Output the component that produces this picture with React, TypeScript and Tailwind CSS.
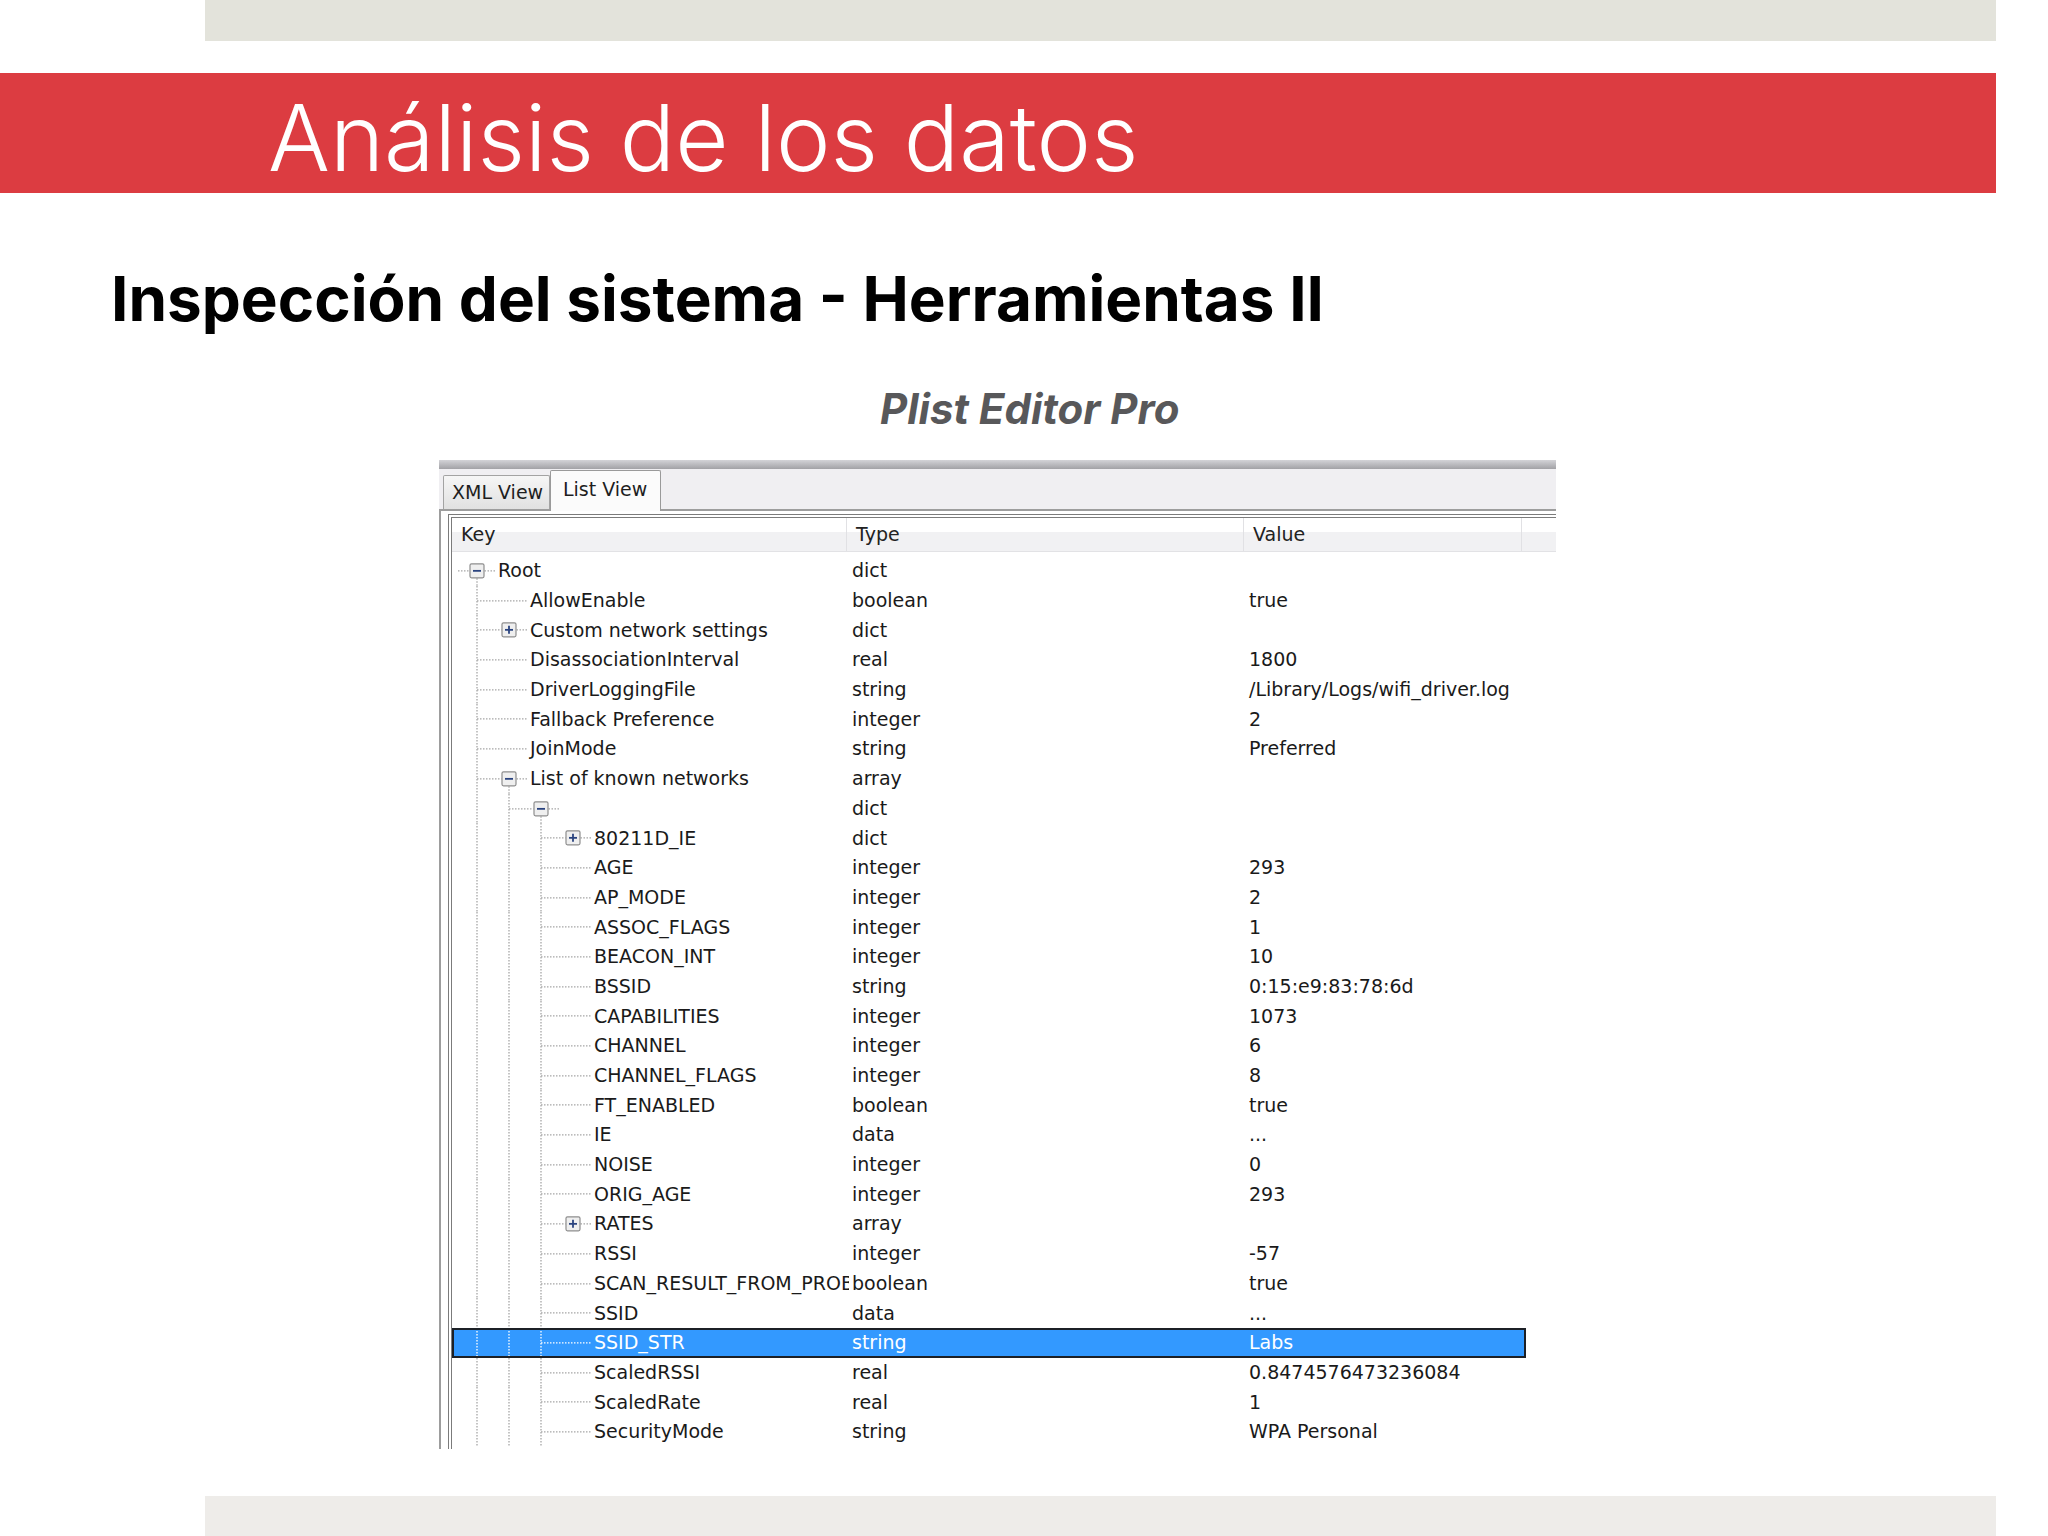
import clsx from 'clsx'

type Row = {
  key: string
  type: string
  value: string
  depth: number
  box?: 'plus' | 'minus'
  selected?: boolean
}

const ROWS: Row[] = [
  { key: 'Root', type: 'dict', value: '', depth: 0, box: 'minus' },
  { key: 'AllowEnable', type: 'boolean', value: 'true', depth: 1 },
  { key: 'Custom network settings', type: 'dict', value: '', depth: 1, box: 'plus' },
  { key: 'DisassociationInterval', type: 'real', value: '1800', depth: 1 },
  { key: 'DriverLoggingFile', type: 'string', value: '/Library/Logs/wifi_driver.log', depth: 1 },
  { key: 'Fallback Preference', type: 'integer', value: '2', depth: 1 },
  { key: 'JoinMode', type: 'string', value: 'Preferred', depth: 1 },
  { key: 'List of known networks', type: 'array', value: '', depth: 1, box: 'minus' },
  { key: '', type: 'dict', value: '', depth: 2, box: 'minus' },
  { key: '80211D_IE', type: 'dict', value: '', depth: 3, box: 'plus' },
  { key: 'AGE', type: 'integer', value: '293', depth: 3 },
  { key: 'AP_MODE', type: 'integer', value: '2', depth: 3 },
  { key: 'ASSOC_FLAGS', type: 'integer', value: '1', depth: 3 },
  { key: 'BEACON_INT', type: 'integer', value: '10', depth: 3 },
  { key: 'BSSID', type: 'string', value: '0:15:e9:83:78:6d', depth: 3 },
  { key: 'CAPABILITIES', type: 'integer', value: '1073', depth: 3 },
  { key: 'CHANNEL', type: 'integer', value: '6', depth: 3 },
  { key: 'CHANNEL_FLAGS', type: 'integer', value: '8', depth: 3 },
  { key: 'FT_ENABLED', type: 'boolean', value: 'true', depth: 3 },
  { key: 'IE', type: 'data', value: '...', depth: 3 },
  { key: 'NOISE', type: 'integer', value: '0', depth: 3 },
  { key: 'ORIG_AGE', type: 'integer', value: '293', depth: 3 },
  { key: 'RATES', type: 'array', value: '', depth: 3, box: 'plus' },
  { key: 'RSSI', type: 'integer', value: '-57', depth: 3 },
  { key: 'SCAN_RESULT_FROM_PROBE', type: 'boolean', value: 'true', depth: 3 },
  { key: 'SSID', type: 'data', value: '...', depth: 3 },
  { key: 'SSID_STR', type: 'string', value: 'Labs', depth: 3, selected: true },
  { key: 'ScaledRSSI', type: 'real', value: '0.8474576473236084', depth: 3 },
  { key: 'ScaledRate', type: 'real', value: '1', depth: 3 },
  { key: 'SecurityMode', type: 'string', value: 'WPA Personal', depth: 3 },
]

const H = 29.7
const MID = H / 2
const lineX = (k: number) => 25 + 32 * k

/* tree connectors for one row, drawn left of the key text */
function TreeLines({ row }: { row: Row }) {
  const { depth, box, selected } = row
  const width = 46 + 32 * depth
  const stroke = selected ? '#ffffff' : '#a6a6a6'
  const dash = '1.5 1.5'
  const c = lineX(depth)

  const verticals = Array.from({ length: depth }, (_, k) => (
    <line key={k} x1={lineX(k)} y1={0} x2={lineX(k)} y2={H} stroke={stroke} strokeWidth={1.3} strokeDasharray={dash} />
  ))

  const hStart = depth === 0 ? 6 : lineX(depth - 1)
  const hEnd = box ? c - 7.5 : width - 2

  return (
    <svg width={width} height={H} className="shrink-0">
      {verticals}
      <line x1={hStart} y1={MID} x2={hEnd} y2={MID} stroke={stroke} strokeWidth={1.3} strokeDasharray={dash} />
      {box && (
        <>
          {box === 'minus' && (
            <line x1={c} y1={MID + 7.5} x2={c} y2={H} stroke={stroke} strokeWidth={1.3} strokeDasharray={dash} />
          )}
          <line x1={c + 7.5} y1={MID} x2={width - 2} y2={MID} stroke={stroke} strokeWidth={1.3} strokeDasharray={dash} />
          <rect x={c - 7} y={MID - 7} width={14} height={14} rx={1.5} fill="#efefef" stroke="#8e8e8e" strokeWidth={1.2} />
          <line x1={c - 4} y1={MID} x2={c + 4} y2={MID} stroke="#2a437f" strokeWidth={1.8} />
          {box === 'plus' && <line x1={c} y1={MID - 4} x2={c} y2={MID + 4} stroke="#2a437f" strokeWidth={1.8} />}
        </>
      )}
    </svg>
  )
}

function TreeRow({ row }: { row: Row }) {
  return (
    <div
      className={clsx(
        'flex h-[29.7px] w-[1074px] items-center',
        row.selected ? 'bg-[#3399ff] text-white outline-2 -outline-offset-2 outline-[#1c2026]' : 'text-[#1a1a1a]'
      )}
    >
      <div className="flex h-full w-[397px] shrink-0 items-center overflow-hidden whitespace-nowrap">
        <TreeLines row={row} />
        <span>{row.key}</span>
      </div>
      <div className="w-[395px] shrink-0 pl-[3px] whitespace-nowrap">{row.type}</div>
      <div className="flex-1 pl-[5px] whitespace-nowrap">{row.value}</div>
    </div>
  )
}

function PlistWindow() {
  return (
    <div className="ml-[439px] mt-[30px] flex h-[989px] w-[1117px] flex-col overflow-hidden font-['DejaVu_Sans',Verdana,sans-serif] text-[19px] leading-none">
      <div className="h-[9px] bg-linear-to-b from-[#d3d3d7] to-[#a2a2a6]" />

      {/* tabs */}
      <div className="relative z-10 flex h-[40px] items-end bg-[#f0eff2] pl-[4px]">
        <div className="flex h-[34px] w-[107px] items-center rounded-t-[2px] border border-b-0 border-[#a3a3a3] bg-linear-to-b from-[#f6f6f6] to-[#e1e1e1] pl-[8px] text-[#1e1e1e]">
          XML View
        </div>
        <div className="-mb-[2px] flex h-[41px] w-[111px] items-center rounded-t-[2px] border border-b-0 border-[#9a9a9a] bg-[#fbfbfb] pb-[4px] pl-[12px] text-[#1e1e1e]">
          List View
        </div>
      </div>

      {/* tab panel */}
      <div className="flex-1 border-l-2 border-t-2 border-[#9d9d9d] bg-white pl-[7px] pt-[3px]">
        <div className="h-full border-l-4 border-t-4 border-double border-[#7b7b7b]">
          <div className="flex h-[34px] border-b border-[#e2e2e5] bg-[linear-gradient(to_bottom,#ffffff_0%,#ffffff_42%,#f1f1f3_42%,#f1f1f3_100%)] text-[#222]">
            <div className="flex w-[395px] items-center border-r border-[#e1e1e4] pl-[9px]">Key</div>
            <div className="flex w-[397px] items-center border-r border-[#e1e1e4] pl-[9px]">Type</div>
            <div className="flex w-[278px] items-center border-r border-[#e1e1e4] pl-[9px]">Value</div>
            <div className="flex-1" />
          </div>
          <div className="pt-[4px]">
            {ROWS.map((r, i) => (
              <TreeRow key={i} row={r} />
            ))}
          </div>
        </div>
      </div>
    </div>
  )
}

export default function App() {
  return (
    <div className="flex h-[1536px] w-[2048px] flex-col overflow-hidden bg-white font-['Inter',sans-serif]">
      <div className="ml-[205px] h-[41px] w-[1791px] shrink-0 bg-[#e3e3db]" />

      <div className="mt-[32px] h-[120px] w-[1996px] shrink-0 bg-[#dc3c41] pl-[268px] pt-[19px]">
        <h1 className="text-[92px] font-light leading-none text-white">Análisis de los datos</h1>
      </div>

      <h2 className="ml-[111px] mt-[75px] text-[62px] font-bold leading-none text-black">
        Inspección del sistema - Herramientas II
      </h2>

      <div className="ml-[880px] mt-[58px] text-[42px] font-bold italic leading-none text-[#58585a]">Plist Editor Pro</div>

      <PlistWindow />

      <div className="mt-[47px] ml-[205px] h-[40px] w-[1791px] shrink-0 bg-[#eeece9]" />
    </div>
  )
}
